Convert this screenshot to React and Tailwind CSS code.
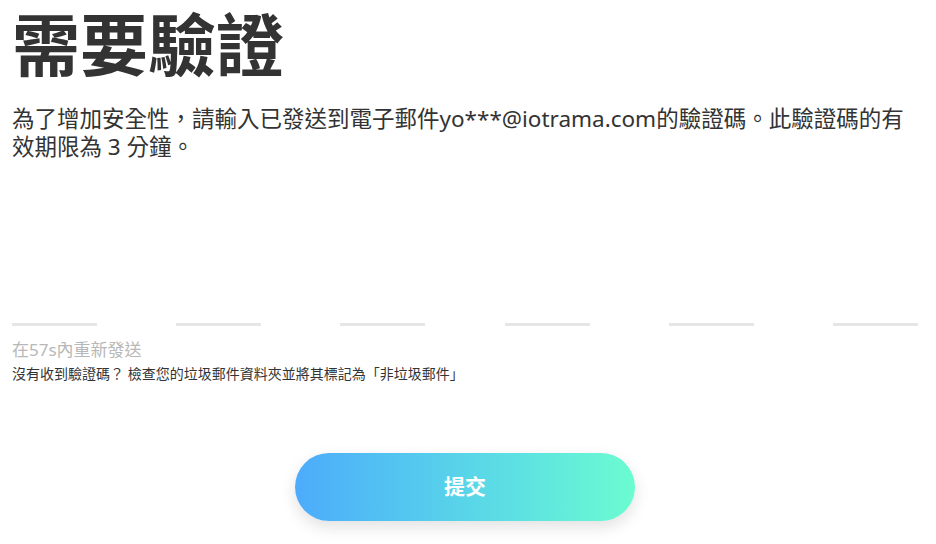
import React from "react";

export default function App() {
  const font = { fontFamily: '"Noto Sans", "Noto Sans CJK TC", sans-serif' };
  return (
    <div className="w-[936px] h-[544px] bg-white overflow-hidden" style={font}>
      <div className="ml-[12px] w-[906px] flex flex-col">
        <h1 className="text-[68px] leading-[90px] font-bold text-[#333333] whitespace-nowrap">需要驗證</h1>
        <p className="mt-[15px] w-[898px] text-[22.5px] leading-[28px] text-[#333333]">
          為了增加安全性，請輸入已發送到電子郵件yo***@iotrama.com的驗證碼。此驗證碼的有效期限為 3 分鐘。
        </p>
        <div className="mt-[162px] flex justify-between">
          {[0, 1, 2, 3, 4, 5].map((i) => (
            <div key={i} className="w-[85px] h-[3px] bg-[#e6e6e6]" />
          ))}
        </div>
        <div className="mt-[13px] text-[17px] leading-[22px] text-[#b8b8b8]">在57s內重新發送</div>
        <div className="mt-[4px] text-[14px] leading-[18px] text-[#333333]">
          沒有收到驗證碼？ 檢查您的垃圾郵件資料夾並將其標記為「非垃圾郵件」
        </div>
        <div className="mt-[70px] flex justify-center">
          <button className="w-[340px] h-[68px] rounded-full bg-gradient-to-r from-[#4dabfb] to-[#6bfcd0] text-white text-[21px] font-bold shadow-[0_6px_16px_rgba(0,0,0,0.12)]">
            提交
          </button>
        </div>
      </div>
    </div>
  );
}
